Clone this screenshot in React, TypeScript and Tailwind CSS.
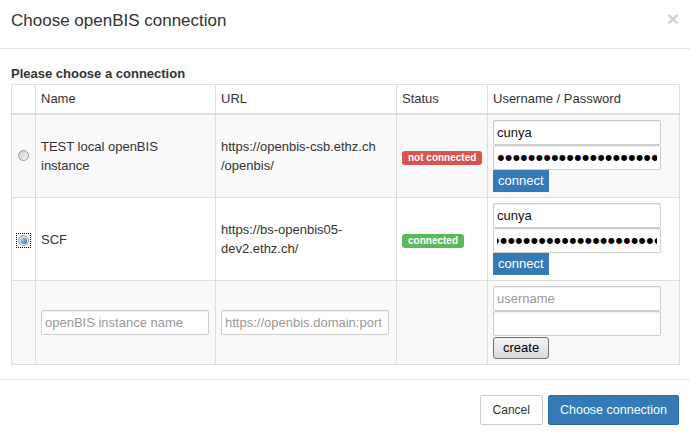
import { FC } from "react";

const Radio: FC<{ checked?: boolean }> = ({ checked }) => (
  <span
    className={
      checked
        ? "inline-flex p-[1px] outline-1 outline-dotted outline-black"
        : "inline-flex p-[1px]"
    }
  >
    <span className="flex items-center justify-center w-[11px] h-[11px] rounded-full border border-[#9a9a9a] bg-gradient-to-br from-[#cfcfcf] to-[#f7f7f7]">
      {checked && (
        <span className="w-[6px] h-[6px] rounded-full bg-[radial-gradient(circle_at_35%_35%,#8fd0ff,#1d5fa0)]" />
      )}
    </span>
  </span>
);

const Field: FC<{ value?: string; placeholder?: string }> = ({ value, placeholder }) => (
  <input
    readOnly
    defaultValue={value}
    placeholder={placeholder}
    className="block w-[168px] h-[25px] border border-[#ccc] rounded-[2px] bg-white px-[3px] text-[13px] text-[#111] placeholder:text-[#999] shadow-[inset_0_1px_1px_rgba(0,0,0,0.075)] outline-none"
  />
);

const Password: FC<{ scrolled?: boolean }> = ({ scrolled }) => (
  <input
    type="password"
    readOnly
    defaultValue={"xxxxxxxxxxxxxxxxxxxxxxxxxxxx"}
    className={
      scrolled
        ? "block w-[168px] h-[25px] border border-[#ccc] rounded-[2px] bg-white px-[3px] text-[22px] text-black outline-none indent-[-5px] shadow-[inset_0_1px_1px_rgba(0,0,0,0.075)]"
        : "block w-[168px] h-[25px] border border-[#ccc] rounded-[2px] bg-white px-[3px] text-[22px] text-black outline-none shadow-[inset_0_1px_1px_rgba(0,0,0,0.075)]"
    }
  />
);

const ConnectButton = () => (
  <button className="block h-[22px] px-[5px] bg-[#337ab7] text-white text-[13px] leading-[22px]">
    connect
  </button>
);

const td = "border border-[#ddd] p-[5px] align-middle";
const th = "border border-[#ddd] border-b-2 p-[5px] text-left font-normal leading-[18px]";

export default function App() {
  return (
    <div className="w-[690px] h-[434px] bg-white text-[#333] text-[13px] font-['Liberation_Sans',Arial,sans-serif]">
      <div className="h-[49px] border-b border-[#e5e5e5] px-[11px] pt-[11px] flex justify-between">
        <h4 className="text-[17px] leading-[20px]">Choose openBIS connection</h4>
        <span className="text-[21px] font-bold text-black/20 leading-[14px] mt-[1px]">×</span>
      </div>

      <div className="px-[11px] pt-[15px] pb-[14px]">
        <div className="font-bold leading-[20px]">Please choose a connection</div>
        <table className="w-[668px] table-fixed border-collapse">
          <colgroup>
            <col className="w-[24px]" />
            <col className="w-[180px]" />
            <col className="w-[181px]" />
            <col className="w-[91px]" />
            <col className="w-[192px]" />
          </colgroup>
          <thead>
            <tr>
              <th className={th}></th>
              <th className={th}>Name</th>
              <th className={th}>URL</th>
              <th className={th}>Status</th>
              <th className={th}>Username / Password</th>
            </tr>
          </thead>
          <tbody className="leading-[19px]">
            <tr className="bg-[#f9f9f9]">
              <td className={td}>
                <Radio />
              </td>
              <td className={td}>
                TEST local openBIS
                <br />
                instance
              </td>
              <td className={td}>
                https://openbis-csb.ethz.ch
                <br />
                /openbis/
              </td>
              <td className={td}>
                <span className="inline-block whitespace-nowrap rounded-[3px] bg-[#d9534f] px-[6px] text-[10px] font-bold leading-[14px] text-white">
                  not connected
                </span>
              </td>
              <td className={td}>
                <Field value="cunya" />
                <Password />
                <ConnectButton />
              </td>
            </tr>
            <tr className="bg-white">
              <td className={td}>
                <Radio checked />
              </td>
              <td className={td}>SCF</td>
              <td className={td}>
                https://bs-openbis05-
                <br />
                dev2.ethz.ch/
              </td>
              <td className={td}>
                <span className="inline-block whitespace-nowrap rounded-[3px] bg-[#5cb85c] px-[6px] text-[10px] font-bold leading-[14px] text-white">
                  connected
                </span>
              </td>
              <td className={td}>
                <Field value="cunya" />
                <Password scrolled />
                <ConnectButton />
              </td>
            </tr>
            <tr className="bg-[#f9f9f9]">
              <td className={td}></td>
              <td className={td}>
                <Field placeholder="openBIS instance name" />
              </td>
              <td className={td}>
                <Field placeholder="https://openbis.domain:port" />
              </td>
              <td className={td}></td>
              <td className={td}>
                <Field placeholder="username" />
                <Field />
                <button className="block mt-[1px] h-[22px] px-[9px] rounded-[3px] border border-[#707070] bg-gradient-to-b from-[#f4f4f4] to-[#d9d9d9] text-[13px] text-black leading-[20px]">
                  create
                </button>
              </td>
            </tr>
          </tbody>
        </table>
      </div>

      <div className="border-t border-[#e5e5e5] px-[11px] pt-[15px] flex justify-end gap-[5px]">
        <button className="h-[30px] px-[12px] rounded-[2px] border border-[#ccc] bg-white text-[12px] text-[#333]">
          Cancel
        </button>
        <button className="h-[30px] px-[11px] rounded-[2px] border border-[#2e6da4] bg-[#337ab7] text-[12.5px] text-white">
          Choose connection
        </button>
      </div>
    </div>
  );
}
